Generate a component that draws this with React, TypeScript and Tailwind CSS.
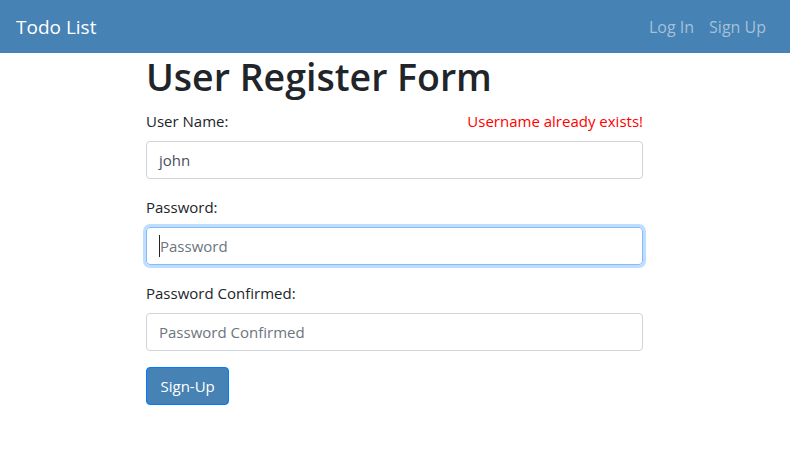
import React from "react";

export default function App() {
  const font = { fontFamily: '"Open Sans", "Noto Sans", sans-serif' };
  return (
    <div className="min-h-[453px] w-full bg-white text-[#212529]" style={font}>
      <nav className="flex h-[53px] items-center justify-between bg-[#4682b4] pl-4 pr-6">
        <span className="text-[19px] leading-[30px] text-white">Todo List</span>
        <div className="flex gap-[15px] text-[16px] text-[#a3c1da]">
          <span>Log In</span>
          <span>Sign Up</span>
        </div>
      </nav>
      <div className="ml-[146px] w-[497px]">
        <h1 className="mb-2 text-[37.5px] font-semibold leading-[48px]">User Register Form</h1>
        <div className="mb-4">
          <div className="mb-2 flex justify-between text-[15px] leading-6">
            <label>User Name:</label>
            <span className="text-[#ff0000]">Username already exists!</span>
          </div>
          <div className="flex h-[38px] items-center rounded border border-[#ced4da] px-3 text-[15px] text-[#495057]">
            john
          </div>
        </div>
        <div className="mb-4">
          <label className="mb-2 block text-[15px] leading-6">Password:</label>
          <div className="flex h-[38px] items-center rounded border border-[#80bdff] px-3 text-[15px] text-[#6c757d] shadow-[0_0_0_3px_rgba(0,123,255,0.25)]">
            <span className="inline-block h-[22px] w-px bg-[#212529]" />
            Password
          </div>
        </div>
        <div className="mb-4">
          <label className="mb-2 block text-[15px] leading-6">Password Confirmed:</label>
          <div className="flex h-[38px] items-center rounded border border-[#ced4da] px-3 text-[15px] text-[#6c757d]">
            Password Confirmed
          </div>
        </div>
        <button className="h-[38px] rounded border border-[#007bff] bg-[#4682b4] px-[13.5px] text-[15px] text-white">
          Sign-Up
        </button>
      </div>
    </div>
  );
}
